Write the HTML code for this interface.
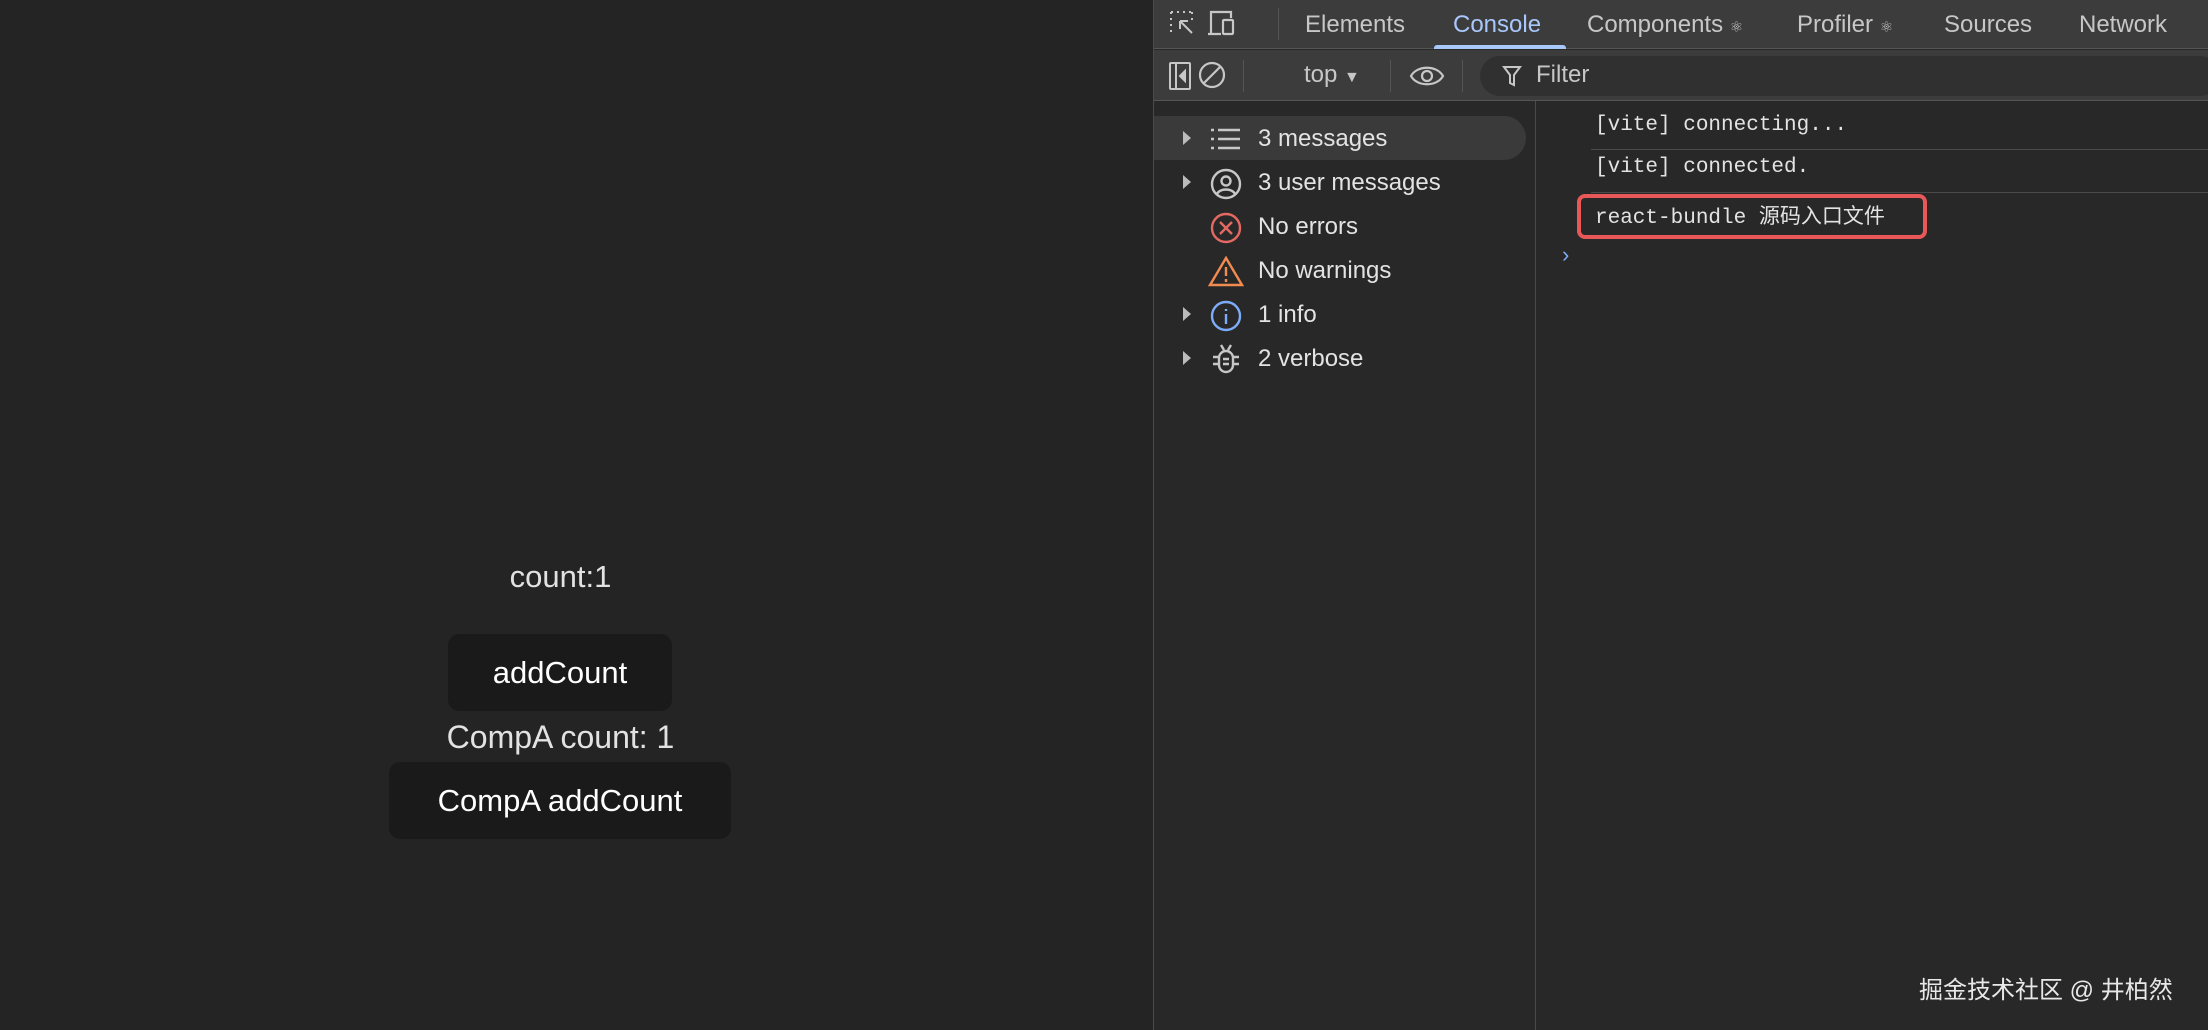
<!DOCTYPE html>
<html><head><meta charset="utf-8"><style>
*{margin:0;padding:0;box-sizing:border-box}
body{width:2208px;height:1030px;background:#242424;position:relative;overflow:hidden;font-family:"Liberation Sans","Noto Sans CJK SC",sans-serif}
.a{position:absolute}
.lt{color:rgba(255,255,255,.87);font-size:31px;white-space:nowrap}
.btn{background:#1a1a1a;border-radius:11px;color:#fff;font-size:31px;display:flex;align-items:center;justify-content:center}
#dt{left:1153px;top:0;width:1055px;height:1030px;background:#282828;border-left:1px solid #4a4a4a}
.tab{top:0;height:49px;line-height:49px;font-size:24px;color:#c7c7c7;white-space:nowrap}
.si{left:0;height:44px;width:1100px;color:#e3e3e3;font-size:24px}
.si span{position:absolute;left:104px;top:8px;white-space:nowrap}
.tri{position:absolute;left:29px;top:14px;width:0;height:0;border-left:8px solid #bbb;border-top:7px solid transparent;border-bottom:7px solid transparent}
.mono{font-family:"Liberation Mono","Noto Sans CJK SC",monospace;font-size:21px;color:#e3e3e3;white-space:nowrap}
</style></head><body>
<div class="a lt" style="left:0;width:1121px;text-align:center;top:559px">count:1</div>
<div class="a btn" style="left:448px;top:634px;width:224px;height:77px">addCount</div>
<div class="a lt" style="left:0;width:1121px;text-align:center;top:719px;font-size:32px">CompA count: 1</div>
<div class="a btn" style="left:389px;top:762px;width:342px;height:77px">CompA addCount</div>

<div class="a" id="dt">
 <div class="a" style="left:0;top:0;width:1055px;height:49px;background:#3c3c3c;border-bottom:1px solid #555"></div>
 <svg class="a" style="left:14px;top:9px" width="30" height="30" viewBox="0 0 30 30" fill="none" stroke="#c7c7c7" stroke-width="2"><path d="M3 3h3M9 3h3M15 3h3M21 3h3M3 3v3M3 9v3M3 15v3M3 21v3M24 3v3M24 9v3" stroke-dasharray="2 2"/><path d="M12 12l12 12M12 12h8M12 12v8"/></svg>
 <svg class="a" style="left:52px;top:9px" width="32" height="30" viewBox="0 0 32 30" fill="none" stroke="#c7c7c7" stroke-width="2.2"><path d="M5 24V3h20v6M2 25h13"/><rect x="17" y="11" width="10" height="14" rx="1"/></svg>
 <div class="a" style="left:124px;top:8px;width:1px;height:32px;background:#555"></div>
 <div class="a tab" style="left:151px">Elements</div>
 <div class="a tab" style="left:299px;color:#a8c7fa">Console</div>
 <div class="a" style="left:280px;top:45px;width:132px;height:4px;background:#a8c7fa;border-radius:3px 3px 0 0"></div>
 <div class="a tab" style="left:433px">Components <small style="font-size:15px">⚛</small></div>
 <div class="a tab" style="left:643px">Profiler <small style="font-size:15px">⚛</small></div>
 <div class="a tab" style="left:790px">Sources</div>
 <div class="a tab" style="left:925px">Network</div>

 <div class="a" style="left:0;top:50px;width:1055px;height:51px;background:#3c3c3c;border-bottom:1px solid #555"></div>
 <svg class="a" style="left:14px;top:61px" width="24" height="30" viewBox="0 0 24 30" fill="none" stroke="#c7c7c7" stroke-width="2"><rect x="2" y="2" width="20" height="26" rx="1"/><path d="M8 2v26"/><path d="M17 10l-5 5 5 5z" fill="#c7c7c7"/></svg>
 <svg class="a" style="left:42px;top:59px" width="32" height="32" viewBox="0 0 32 32" fill="none" stroke="#c7c7c7" stroke-width="2.2"><circle cx="16" cy="16" r="12"/><path d="M8 24L24 8"/></svg>
 <div class="a" style="left:89px;top:60px;width:1px;height:32px;background:#555"></div>
 <div class="a" style="left:150px;top:61px;font-size:24px;color:#c7c7c7">top <span style="font-size:16px">▼</span></div>
 <div class="a" style="left:236px;top:60px;width:1px;height:32px;background:#555"></div>
 <svg class="a" style="left:255px;top:61px" width="36" height="30" viewBox="0 0 36 30" fill="none" stroke="#c7c7c7" stroke-width="2.2"><path d="M2 15C8 4 28 4 34 15C28 26 8 26 2 15z"/><circle cx="18" cy="15" r="5"/></svg>
 <div class="a" style="left:308px;top:60px;width:1px;height:32px;background:#555"></div>
 <div class="a" style="left:326px;top:56px;width:740px;height:40px;background:#303030;border-radius:20px"></div>
 <svg class="a" style="left:348px;top:64px" width="20" height="24" viewBox="0 0 20 24" fill="none" stroke="#c7c7c7" stroke-width="2"><path d="M2 3h16l-6 8v10l-4-2v-8z"/></svg>
 <div class="a" style="left:382px;top:61px;font-size:24px;color:#c7c7c7">Filter</div>

 <div class="a" style="left:381px;top:101px;width:1px;height:929px;background:#4a4a4a"></div>
 <div class="a" style="left:0;top:116px;width:372px;height:44px;background:#3a3a3a;border-radius:0 22px 22px 0"></div>
 <div class="a si" style="top:117px"><i class="tri"></i>
  <svg class="a" style="left:56px;top:10px" width="32" height="24" viewBox="0 0 32 24" stroke="#c7c7c7" stroke-width="2.5"><path d="M8 3h22M8 12h22M8 21h22M1 3h3M1 12h3M1 21h3"/></svg><span>3 messages</span></div>
 <div class="a si" style="top:161px"><i class="tri"></i>
  <svg class="a" style="left:56px;top:7px" width="32" height="32" viewBox="0 0 32 32" fill="none" stroke="#c7c7c7" stroke-width="2.4"><circle cx="16" cy="16" r="14"/><circle cx="16" cy="13" r="4.5"/><path d="M7 26c3-6 15-6 18 0"/></svg><span>3 user messages</span></div>
 <div class="a si" style="top:205px">
  <svg class="a" style="left:56px;top:7px" width="32" height="32" viewBox="0 0 32 32" fill="none" stroke="#e46962" stroke-width="2.4"><circle cx="16" cy="16" r="14"/><path d="M10 10l12 12M22 10L10 22"/></svg><span>No errors</span></div>
 <div class="a si" style="top:249px">
  <svg class="a" style="left:54px;top:6px" width="36" height="32" viewBox="0 0 36 32" fill="none" stroke="#f28b50" stroke-width="2.4"><path d="M18 3L34 30H2z"/><path d="M18 12v9M18 24v3"/></svg><span>No warnings</span></div>
 <div class="a si" style="top:293px"><i class="tri"></i>
  <svg class="a" style="left:56px;top:7px" width="32" height="32" viewBox="0 0 32 32" fill="none" stroke="#7cacf8" stroke-width="2.4"><circle cx="16" cy="16" r="14"/><path d="M16 14v10M16 9v2"/></svg><span>1 info</span></div>
 <div class="a si" style="top:337px"><i class="tri"></i>
  <svg class="a" style="left:58px;top:6px" width="28" height="32" viewBox="0 0 28 32" fill="none" stroke="#c7c7c7" stroke-width="2.4"><path d="M9 2l3 5M19 2l-3 5"/><rect x="7" y="8" width="14" height="21" rx="7"/><path d="M1 14h6M1 21h6M21 14h6M21 21h6M11 16h6M11 21h6"/></svg><span>2 verbose</span></div>

 <div class="a mono" style="left:441px;top:114px">[vite] connecting...</div>
 <div class="a" style="left:437px;top:149px;width:618px;height:1px;background:#4a4a4a"></div>
 <div class="a mono" style="left:441px;top:156px">[vite] connected.</div>
 <div class="a" style="left:437px;top:192px;width:618px;height:1px;background:#4a4a4a"></div>
 <div class="a mono" style="left:441px;top:200px">react-bundle 源码入口文件</div>
 <div class="a" style="left:423px;top:194px;width:350px;height:45px;border:4px solid #e85858;border-radius:8px"></div>
 <div class="a" style="left:408px;top:242px;color:#7cacf8;font-size:22px">›</div>
</div>
<div class="a" style="left:1919px;top:970px;font-size:24px;color:#e8e8e8;white-space:nowrap">掘金技术社区 @ 井柏然</div>
</body></html>
